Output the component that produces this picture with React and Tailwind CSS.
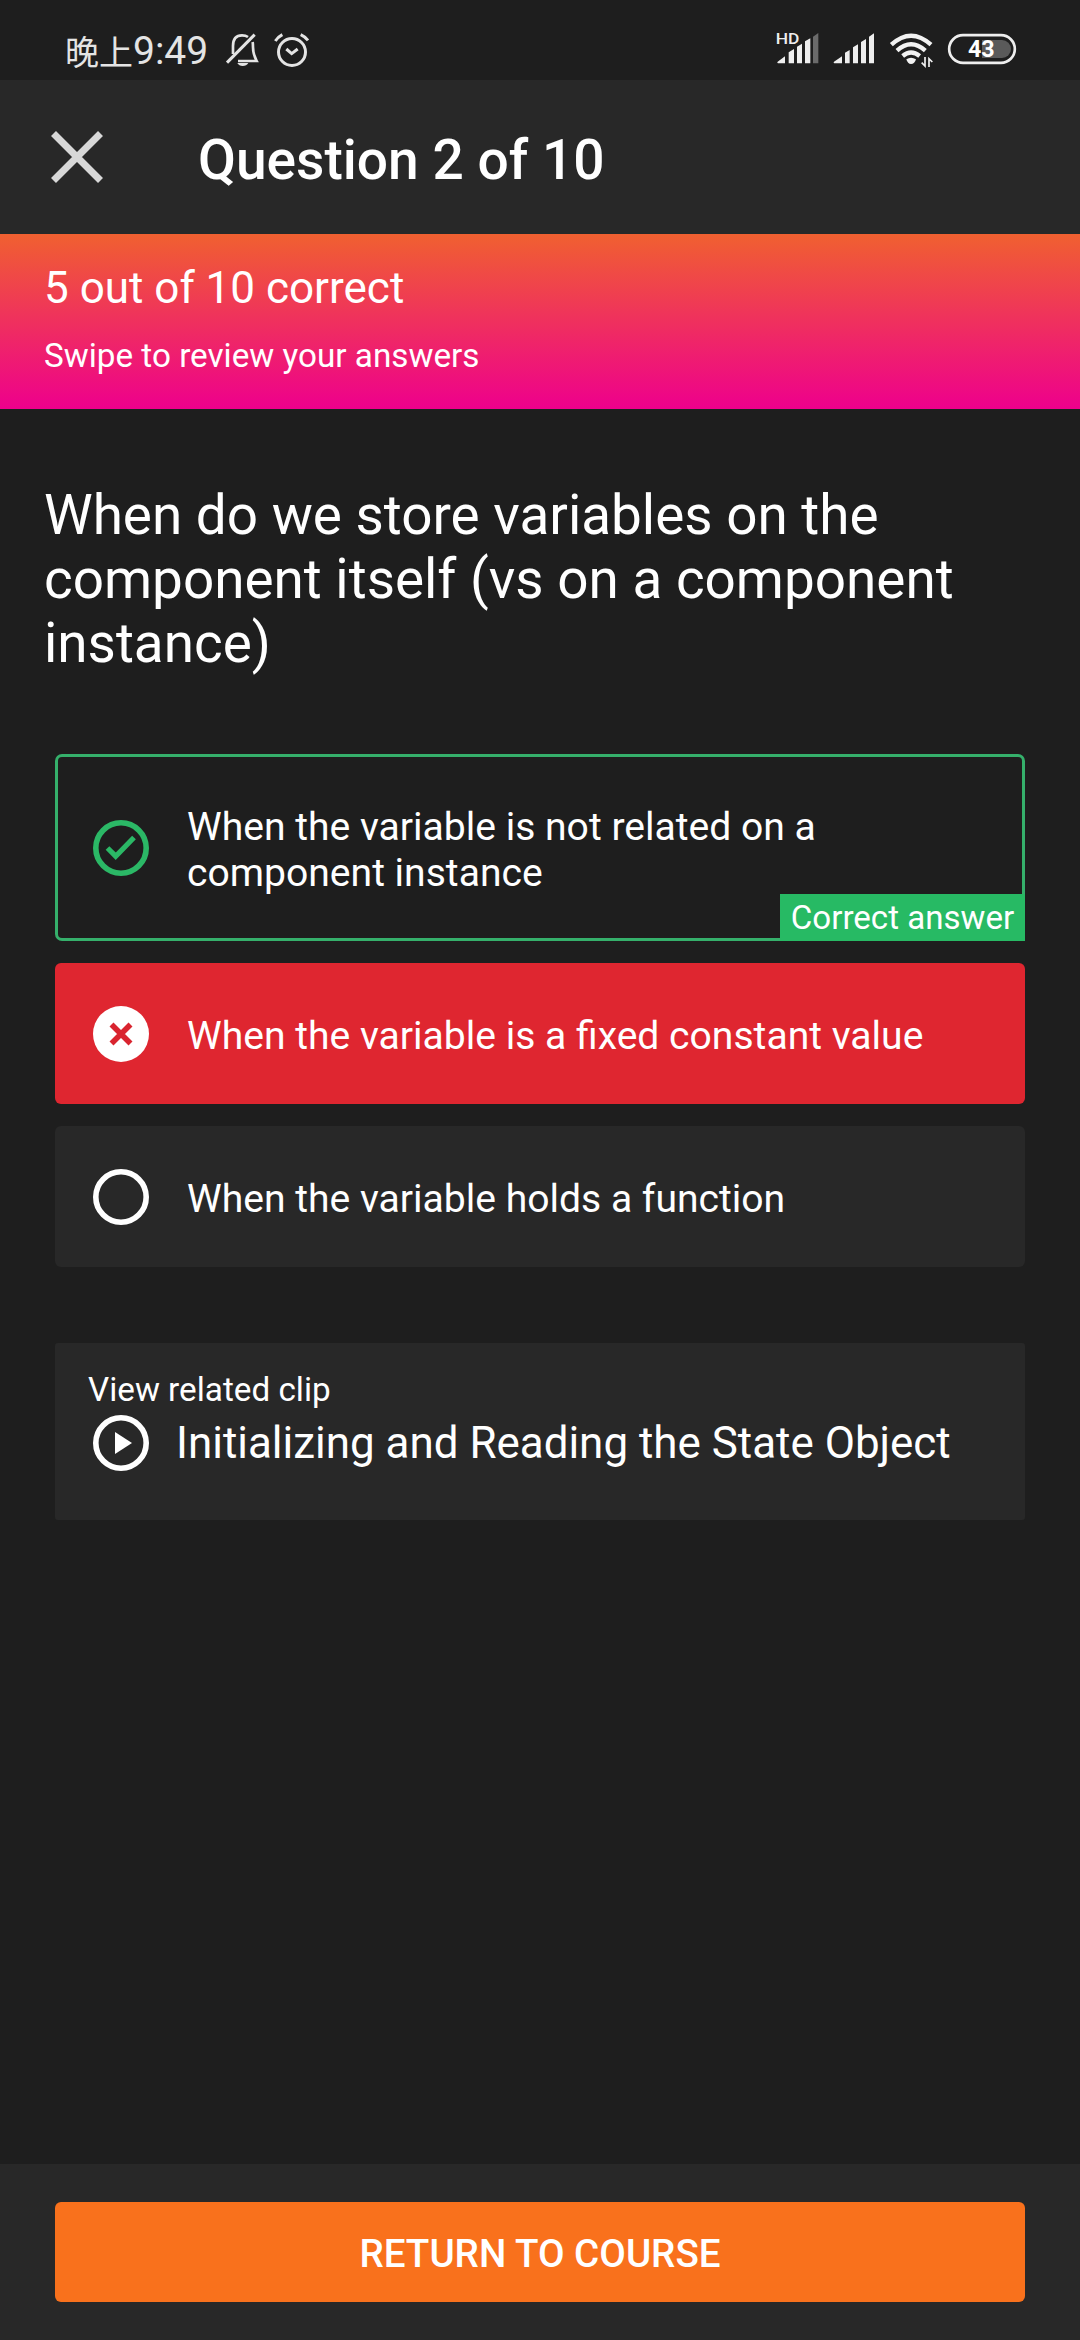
function BellOff() {
  return (
    <svg viewBox="555 66 102 108" className="ml-[17px] h-9 w-[34px] shrink-0" fill="none" stroke="#e4e4e4" strokeWidth="8">
      <path d="M579 132V108Q579 76 606 76Q617 76 624 81M638 96Q639 102 639 112Q639 132 650 153H594" />
      <path d="M561 158L644 74" strokeWidth="9" />
      <path d="M592 159H625Q620 168 608 168Q597 168 592 159Z" fill="#e4e4e4" stroke="none" />
    </svg>
  );
}

function Alarm() {
  return (
    <svg viewBox="699 66 111 108" className="ml-[14px] h-9 w-[37px] shrink-0" fill="none" stroke="#e4e4e4" strokeWidth="9">
      <circle cx="756" cy="126" r="40.5" />
      <path d="M706 93Q714 81 727 74M782 74Q795 80 804 91M739 117L755 131L773 117" />
    </svg>
  );
}

function SignalHd() {
  return (
    <svg viewBox="78 54 129 111" className="-mt-1 h-[37px] w-[43px] shrink-0 overflow-visible" fill="#eeeeee">
      <text x="77" y="102" fontSize="46" fontWeight="500" fontFamily="Roboto, sans-serif" textLength="71" lengthAdjust="spacingAndGlyphs">HD</text>
      <path d="M83 155L105 139V160H84Q80 159 83 155ZM116 127L132 117V160H116ZM141 110L156 101V160H141ZM165 94L181 85V160H165Z" />
      <path d="M189 80L205 69V160H189Z" fill="#6b6b6b" />
    </svg>
  );
}

function Signal() {
  return (
    <svg viewBox="249 66 126 99" className="ml-[14px] h-[33px] w-[42px] shrink-0" fill="#eeeeee">
      <path d="M252 155L276 139V160H253Q249 159 252 155ZM285 128L299 120V160H285ZM309 112L324 103V160H309ZM333 96L348 87V160H333ZM357 80L372 70V160H357Z" />
    </svg>
  );
}

function Wifi() {
  return (
    <svg viewBox="417 66 132 108" className="ml-[14px] h-9 w-11 shrink-0" fill="none" stroke="#f2f2f2" strokeWidth="13">
      <path d="M424 104Q483 50 543 104M441 122Q483 84 526 122M458 138Q483 117 509 138" />
      <path d="M469 148Q483 139 498 148Q494 162 483 162Q473 162 469 148Z" fill="#f2f2f2" stroke="none" />
      <path d="M525 141V168L515 158M537 171V146L547 156" strokeWidth="5" />
    </svg>
  );
}

function Battery() {
  return (
    <svg viewBox="591 66 210 99" className="ml-[14px] h-[33px] w-[70px] shrink-0">
      <path d="M696 90H756A27 27 0 0 1 756 144H696Z" fill="#5a5a5a" />
      <rect x="597.5" y="75.5" width="197" height="83" rx="41.5" fill="none" stroke="#eeeeee" strokeWidth="8" />
      <text x="654" y="142" fontSize="72" fontWeight="700" fontFamily="Roboto, sans-serif" fill="#ffffff" textLength="80" lengthAdjust="spacingAndGlyphs">43</text>
    </svg>
  );
}

function StatusBar() {
  return (
    <div className="flex h-20 shrink-0 items-start pt-8 pr-[63px] pl-[65px]">
      <div className="flex h-[38px] w-[143px] items-center whitespace-nowrap text-[#e4e4e4]">
        <span className="font-['Noto_Sans_CJK_SC',sans-serif] text-[34px] leading-[38px]">晚上</span>
        <span className="text-[39px] leading-[38px]">9:49</span>
      </div>
      <BellOff />
      <Alarm />
      <div className="ml-auto flex items-start">
        <SignalHd />
        <Signal />
        <Wifi />
        <Battery />
      </div>
    </div>
  );
}

function CheckIcon() {
  return (
    <svg viewBox="0 0 56 56" className="size-14 shrink-0" fill="none" stroke="#2bb866">
      <circle cx="28" cy="28" r="25.2" strokeWidth="5.6" />
      <path d="M14.5 28L22.7 36.2L41 17.5" strokeWidth="5.2" />
    </svg>
  );
}

function WrongIcon() {
  return (
    <svg viewBox="0 0 56 56" className="size-14 shrink-0">
      <circle cx="28" cy="28" r="28" fill="#ffffff" />
      <path d="M18.5 18.5L37.5 37.5M37.5 18.5L18.5 37.5" stroke="#d9242f" strokeWidth="5.6" />
    </svg>
  );
}

function EmptyIcon() {
  return (
    <svg viewBox="0 0 56 56" className="size-14 shrink-0" fill="none" stroke="#ffffff">
      <circle cx="28" cy="28" r="25.2" strokeWidth="5.6" />
    </svg>
  );
}

function PlayIcon() {
  return (
    <svg viewBox="0 0 56 56" className="size-14 shrink-0">
      <circle cx="28" cy="28" r="25.2" fill="none" stroke="#ffffff" strokeWidth="5.6" />
      <path d="M22 17V39L39 28Z" fill="#ffffff" />
    </svg>
  );
}

export default function App() {
  return (
    <div className="flex h-[2340px] w-[1080px] flex-col overflow-hidden bg-[#1e1e1e] font-[Roboto,'Noto_Sans_CJK_SC',sans-serif] text-white">
      <StatusBar />

      <header className="flex h-[154px] shrink-0 items-center bg-[#282828] pl-[51px]">
        <svg viewBox="0 0 52 52" className="size-[52px] shrink-0" stroke="#d8d8d8" strokeWidth="7">
          <path d="M2.5 2.5L49.5 49.5M49.5 2.5L2.5 49.5" />
        </svg>
        <h1 className="ml-[95px] pt-[5px] text-[55.1px] leading-[64px] font-medium whitespace-nowrap">Question 2 of 10</h1>
      </header>

      <section className="h-[175px] shrink-0 bg-linear-to-b/srgb from-[#f06030] to-[#ee008c] pt-7 pl-11">
        <p className="text-[44px] leading-[52px]">5 out of 10 correct</p>
        <p className="mt-[22px] text-[33.25px] leading-[39px]">Swipe to review your answers</p>
      </section>

      <main className="flex grow flex-col">
        <h2 className="mt-[74px] ml-11 text-[54.85px] leading-[64px]">
          When do we store variables on the<br />
          component itself (vs on a component<br />
          instance)
        </h2>

        <div className="mx-[55px] mt-[79px] flex flex-col gap-[22px] text-[39.1px] leading-[46px]">
          <div className="relative flex h-[187px] items-center rounded-[7px] border-[3px] border-[#35b06b] pl-[35px]">
            <CheckIcon />
            <p className="ml-[38px] pt-[5px]">
              When the variable is not related on a<br />
              component instance
            </p>
            <span className="absolute -right-[3px] -bottom-[3px] flex h-[47px] w-[245px] items-center justify-center bg-[#27ba64] text-[33.1px] leading-[47px] whitespace-nowrap">Correct answer</span>
          </div>
          <div className="flex h-[141px] items-center rounded-[6px] bg-[#df2630] pl-[38px]">
            <WrongIcon />
            <p className="ml-[38px] pt-[5px]">When the variable is a fixed constant value</p>
          </div>
          <div className="flex h-[141px] items-center rounded-[6px] bg-[#282828] pl-[38px]">
            <EmptyIcon />
            <p className="ml-[38px] pt-[5px]">When the variable holds a function</p>
          </div>
        </div>

        <div className="mx-[55px] mt-[76px] h-[177px] rounded-[3px] bg-[#282828] pt-[27px]">
          <p className="ml-[33px] text-[33.25px] leading-[39px]">View related clip</p>
          <div className="mt-[6px] flex items-center pl-[38px]">
            <PlayIcon />
            <p className="ml-[27px] text-[43.95px] leading-[54px] whitespace-nowrap">Initializing and Reading the State Object</p>
          </div>
        </div>
      </main>

      <footer className="h-[176px] shrink-0 bg-[#282828] px-[55px] pt-[38px]">
        <button className="flex h-[100px] w-full items-center justify-center rounded-[6px] bg-[#f9711c] pt-1 text-[38.6px] leading-[46px] font-medium">RETURN TO COURSE</button>
      </footer>
    </div>
  );
}
